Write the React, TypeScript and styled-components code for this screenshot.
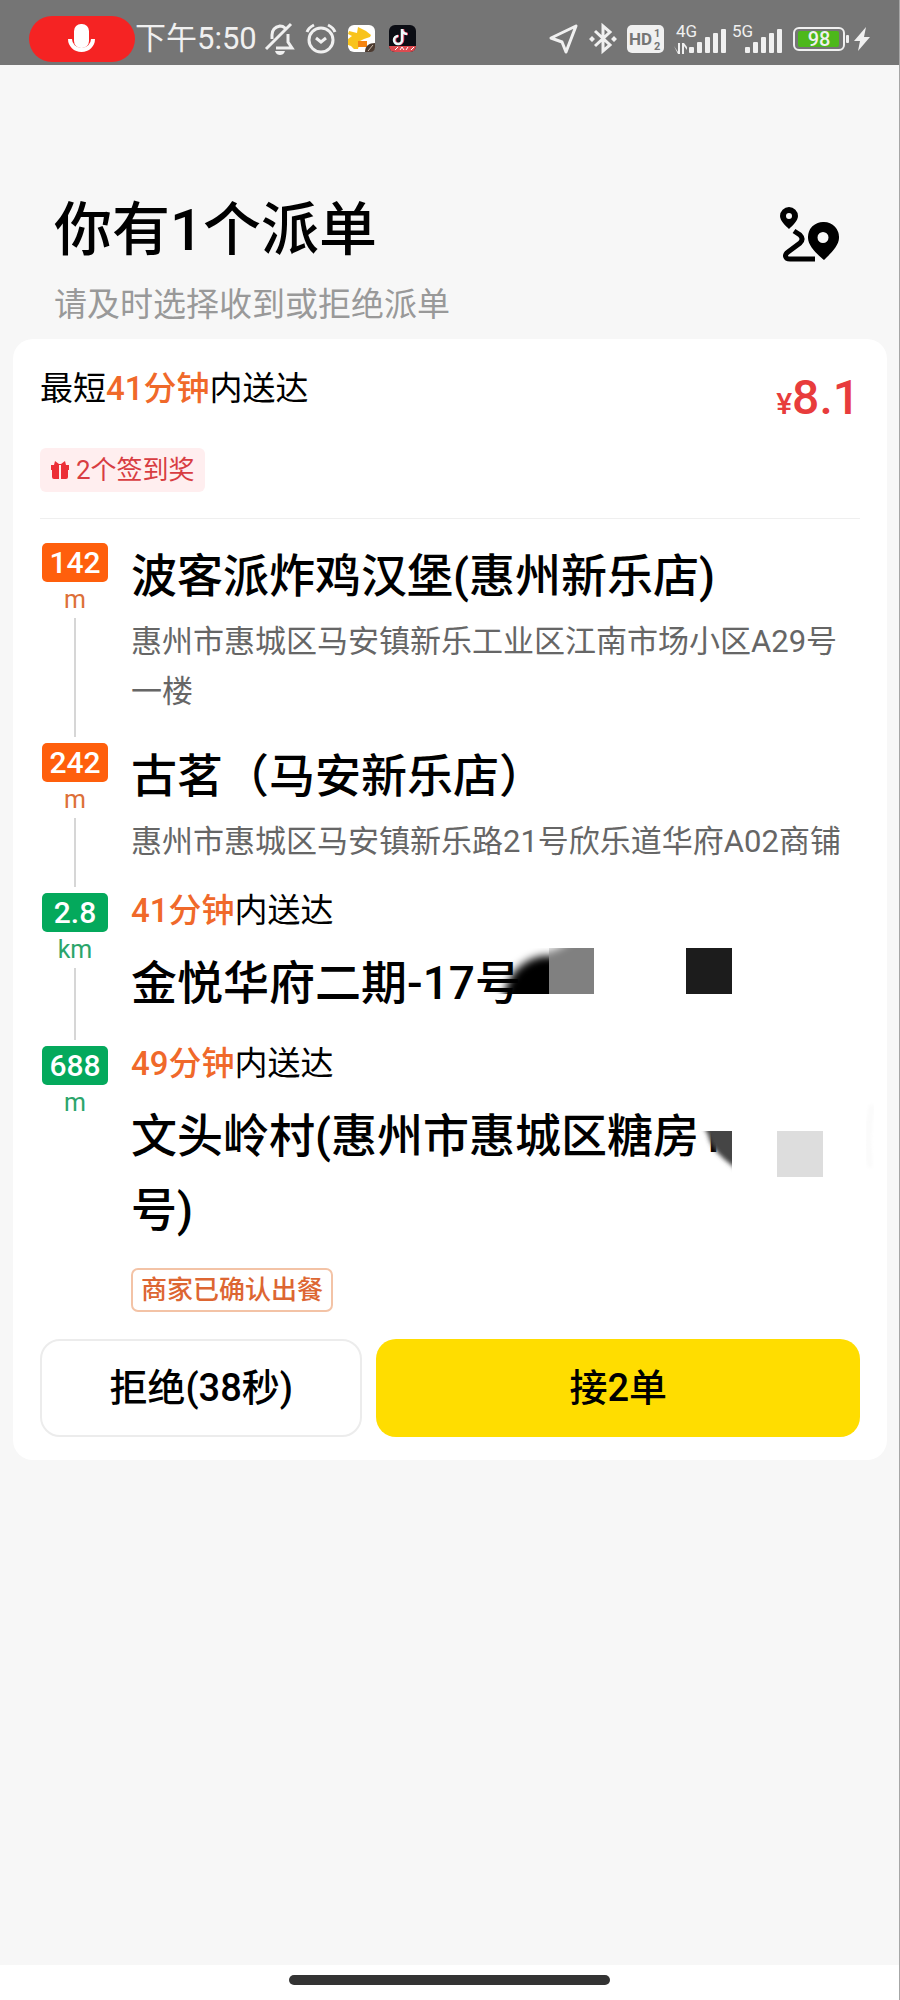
import React from 'react';
import styled, { createGlobalStyle } from 'styled-components';

const GlobalStyle = createGlobalStyle`
  * { box-sizing: border-box; }
  body {
    margin: 0;
    background: #f7f7f7;
    color: #000;
    font-family: Roboto, "Noto Sans CJK SC", sans-serif;
  }
  h1, h2, p, ol { margin: 0; padding: 0; }
`;

const orange = '#f0692a';
const pickup = '#ff5f0c';
const dropoff = '#04a95c';

const Screen = styled.div`
  display: flex;
  flex-direction: column;
  min-height: 100vh;
  border-right: 1px solid #a6a6a6;
`;

const StatusBar = styled.header`
  display: flex;
  justify-content: space-between;
  align-items: center;
  height: 65px;
  padding: 12px 28px 0 29px;
  background: #757575;
  color: #f0f0f0;
`;

const StatusGroup = styled.div<{ $gap: number }>`
  display: flex;
  align-items: center;
  gap: ${(p) => p.$gap}px;
`;

const MicPill = styled.span`
  display: flex;
  align-items: center;
  justify-content: center;
  width: 106px;
  height: 46px;
  border-radius: 23px;
  background: #f52323;
`;

const Clock = styled.time`
  margin: 0 8px 0 0;
  font-size: 31px;
  line-height: 40px;
  white-space: nowrap;
`;

const Glyph = styled.svg`
  display: block;
  flex: none;
  overflow: visible;
`;

const PageHead = styled.div`
  display: flex;
  justify-content: space-between;
  align-items: flex-start;
  padding: 123px 59px 6px 54px;
`;

const PageTitle = styled.h1`
  font-size: 58px;
  line-height: 84px;
  font-weight: 500;
`;

const PageHint = styled.p`
  margin-top: 9px;
  font-size: 33px;
  line-height: 48px;
  color: #999;
`;

const RouteButton = styled.button`
  display: block;
  margin-top: 19px;
  padding: 0;
  border: 0;
  background: none;
`;

const Card = styled.main`
  margin: 4px 12px 0 13px;
  padding: 26px 27px 23px;
  border-radius: 20px;
  background: #fff;
`;

const Summary = styled.div`
  display: flex;
  justify-content: space-between;
  align-items: flex-start;
`;

const Deadline = styled.p`
  font-size: 33px;
  line-height: 48px;
`;

const Minutes = styled.strong`
  font-weight: 500;
  color: ${orange};
`;

const Price = styled.p`
  font-size: 48px;
  line-height: 66px;
  font-weight: 500;
  color: #e83c3c;
`;

const Currency = styled.span`
  font-size: 30px;
  line-height: 1;
`;

const RewardTag = styled.p`
  display: flex;
  align-items: center;
  gap: 6px;
  width: fit-content;
  height: 44px;
  && { margin-top: 17px; padding: 0 10px; }
  border-radius: 6px;
  background: #ffeeef;
  color: #d83d42;
  font-size: 26px;
  line-height: 44px;
`;

const Divider = styled.hr`
  height: 1px;
  margin: 26px 0 20px;
  border: 0;
  background: #efefef;
`;

const Stops = styled.ol`
  list-style: none;
`;

const Stop = styled.li`
  display: grid;
  grid-template-columns: 70px minmax(0, 1fr);
  column-gap: 21px;
`;

const Rail = styled.div`
  display: flex;
  flex-direction: column;
  align-items: center;
  padding-top: 4px;
`;

const Distance = styled.span<{ $color: string }>`
  width: 66px;
  height: 39px;
  border-radius: 5px;
  background: ${(p) => p.$color};
  color: #fff;
  font-size: 30px;
  line-height: 39px;
  font-weight: 500;
  text-align: center;
`;

const Unit = styled.span<{ $color: string }>`
  color: ${(p) => (p.$color === pickup ? '#dd7038' : '#2ba56b')};
  font-size: 25px;
  line-height: 36px;
`;

const Track = styled.span`
  flex: 1;
  width: 2px;
  margin-bottom: 2px;
  background: #d6d6d6;
`;

const StopBody = styled.div<{ $last?: boolean }>`
  padding-bottom: ${(p) => (p.$last ? 27 : 22)}px;
`;

const StopTime = styled.p`
  && { padding: 2px 0 15px; }
  font-size: 33px;
  line-height: 40px;
`;

const StopName = styled.h2`
  position: relative;
  font-size: 46px;
  line-height: 74px;
  font-weight: 500;
`;

const Address = styled.p`
  && { margin-top: 4px; }
  font-size: 31px;
  line-height: 50px;
  color: #666;
`;

const Redaction = styled.svg`
  position: absolute;
  top: 0;
  left: 0;
  overflow: visible;
`;

const ReadyTag = styled.span`
  display: block;
  width: fit-content;
  margin-top: 21px;
  padding: 0 8px;
  border: 2px solid #f3c3a6;
  border-radius: 7px;
  color: #dd6632;
  font-size: 26px;
  line-height: 40px;
  font-weight: 500;
`;

const Actions = styled.div`
  display: grid;
  grid-template-columns: 2fr 3fr;
  gap: 14px;
`;

const Action = styled.button<{ $primary?: boolean }>`
  height: 98px;
  padding: 0;
  border: ${(p) => (p.$primary ? '0' : '2px solid #ececec')};
  border-radius: 20px;
  background: ${(p) => (p.$primary ? '#ffdd00' : '#fff')};
  color: #000;
  font-family: inherit;
  font-size: 38px;
  line-height: 48px;
  font-weight: 500;
`;

const HomeBar = styled.footer`
  display: flex;
  justify-content: center;
  height: 35px;
  margin-top: auto;
  padding-top: 10px;
  background: #fff;
`;

const HomeHandle = styled.span`
  width: 321px;
  height: 10px;
  border-radius: 5px;
  background: #333;
`;

const signalHeights = [6, 11, 16, 20, 24];

function Signal({ label, data }: { label: string; data?: boolean }) {
  const start = data ? 15 : 13;
  return (
    <Glyph width={data ? 53 : 51} height="30" fill="#f0f0f0">
      <text x={data ? 2 : 0} y="13" fontSize="17">{label}</text>
      {data && <path d="M0 22l4 6v-9h2v11H4zM8 19v11h2v-8l3 4v-3l-3-4z" />}
      {signalHeights.map((h, i) => (
        <rect key={h} x={start + i * 8} y={29 - h} width="5" height={h} rx="1" />
      ))}
    </Glyph>
  );
}

function StatusIcons() {
  return (
    <StatusBar>
      <StatusGroup $gap={11}>
        <StatusGroup $gap={0}>
          <MicPill>
            <Glyph width="28" height="30" fill="none">
              <rect x="6" y="0" width="15" height="24" rx="7" fill="#fff" />
              <path d="M2 15c0 6 5 11 11.500 11S25 21 25 15" stroke="#fff" strokeWidth="4" />
            </Glyph>
          </MicPill>
          <Clock>下午5:50</Clock>
          <Glyph width="30" height="32" fill="none" stroke="#f0f0f0" strokeWidth="3">
            <path d="M1 26L26 1M7 16v-4c0-5 3-8 8-9 2 0 4 1 5 2M23 11v8l4 6H11" />
            <path d="M10 28h10c-1 3-3 4-5 4s-4-1-5-4z" fill="#f0f0f0" stroke="none" />
          </Glyph>
        </StatusGroup>
        <Glyph width="31" height="30" fill="none" stroke="#f0f0f0" strokeWidth="3">
          <circle cx="15" cy="16" r="12" />
          <path d="M1 8c1-3 3-5 7-7M29 8c-1-3-3-5-7-7M10 14l5 4 5-4" />
        </Glyph>
        <Glyph width="30" height="28">
          <rect width="27" height="27" rx="6" fill="#fff" />
          <path d="M1 6l8 2 1-6 8 4 5 4-1 2-6 2-4 2-2 8H6l-3-3-3-1v-6l4-3-4-2z" fill="#f8c31c" />
          <rect x="10" y="16" width="9" height="6" fill="#f58410" />
          <path d="M17 27c0-6 4-9 10-9v4c0 3-2 5-5 5z" fill="#4b3a30" />
          <path d="M20 26l5-6" stroke="#c9b7a7" />
        </Glyph>
        <Glyph width="28" height="28">
          <clipPath id="app"><rect width="27" height="27" rx="6" /></clipPath>
          <g clipPath="url(#app)">
            <rect width="27" height="27" fill="#0b0d14" />
            <path d="M14 4v11a4 4 0 1 1-4-4M14 4c0 3 2 5 5 5" fill="none" stroke="#f04a68" strokeWidth="2.500" />
            <path d="M13 4v11a4 4 0 1 1-4-4M13 4c0 3 2 5 5 5" fill="none" stroke="#e9fbfb" strokeWidth="2.500" />
            <path d="M0 21h27v6H0z" fill="#dc4b50" />
            <path d="M6 25l3-3M11 25l2-3 2 3M17 25l2-3M22 25l3-3" stroke="#fff" fill="none" />
          </g>
        </Glyph>
      </StatusGroup>
      <StatusGroup $gap={10}>
        <Glyph width="30" height="30" fill="none" stroke="#f0f0f0" strokeWidth="3" strokeLinejoin="round">
          <path d="M27 2L2 14l11 4 4 10z" />
        </Glyph>
        <Glyph width="28" height="32" fill="none" stroke="#f0f0f0" strokeWidth="3">
          <path d="M6 8l15 14-7 6V3l7 6L6 23" />
          <path d="M3 13l3 3-3 3-3-3zM25 13l3 3-3 3-3-3z" fill="#f0f0f0" stroke="none" />
        </Glyph>
        <Glyph width="37" height="28">
          <rect width="37" height="28" rx="5" fill="#f0f0f0" />
          <g fill="#757575" fontWeight="700">
            <text x="2" y="20" fontSize="17">HD</text>
            <text x="27" y="12" fontSize="11">1</text>
            <text x="27" y="25" fontSize="11">2</text>
          </g>
        </Glyph>
        <StatusGroup $gap={5}>
          <Signal label="4G" data />
          <Signal label="5G" />
        </StatusGroup>
        <StatusGroup $gap={4}>
          <Glyph width="57" height="24">
            <rect x="1" y="1" width="50" height="22" rx="5" fill="none" stroke="#f0f0f0" strokeWidth="2" />
            <rect x="5" y="4" width="41" height="16" rx="2" fill="#4db81b" />
            <rect x="53" y="8" width="3" height="8" rx="1" fill="#f0f0f0" />
            <text x="26" y="19" fontSize="20" fontWeight="500" textAnchor="middle" fill="#f0f0f0">98</text>
          </Glyph>
          <Glyph width="17" height="24" fill="#f0f0f0">
            <path d="M12 0L0 14h6L4 24l12-14h-6z" />
          </Glyph>
        </StatusGroup>
      </StatusGroup>
    </StatusBar>
  );
}

function RouteIcon() {
  return (
    <Glyph width="60" height="56" fillRule="evenodd">
      <path d="M9 0a9 9 0 0 1 9 9c0 5-6 10-9 13C6 19 0 14 0 9a9 9 0 0 1 9-9zm0 6a3 3 0 1 0 0 6 3 3 0 0 0 0-6z" />
      <path d="M44 15a15 15 0 0 1 15 16c0 8-10 17-15 22-6-5-16-14-16-22a15 15 0 0 1 16-16zm-1 10a5 5 0 1 0 0 11 5 5 0 0 0 0-11z" />
      <path d="M14 24l6 4q4 4 0 8L8 45c-4 3-3 7 2 7h25" fill="none" stroke="#000" strokeWidth="5" />
    </Glyph>
  );
}

function GiftIcon() {
  return (
    <Glyph width="20" height="20" fill="#ec2f37">
      <path d="M5 1l4 3h2l4-3 1 4h3v5h-1v7q0 2-2 2h-5V5H9v14H4q-2 0-2-2v-7H1V5h3z" />
    </Glyph>
  );
}

function BuildingRedaction() {
  return (
    <Redaction width="600" height="74" aria-hidden="true">
      <defs>
        <filter id="soft" x="-50%" y="-50%" width="200%" height="200%"><feGaussianBlur stdDeviation="4" /></filter>
        <clipPath id="blockA"><rect x="361" y="2" width="57" height="46" /></clipPath>
        <clipPath id="blockB"><rect x="418" y="0" width="45" height="48" /></clipPath>
      </defs>
      <g clipPath="url(#blockA)">
        <path d="M371 60q4-42 40-50h30v50z" filter="url(#soft)" />
      </g>
      <rect x="418" y="2" width="45" height="46" fill="#808080" />
      <g clipPath="url(#blockB)">
        <path d="M405-8h36q-10 12-36 16z" fill="#fff" filter="url(#soft)" />
      </g>
      <rect x="555" y="2" width="46" height="46" fill="#1c1c1c" />
    </Redaction>
  );
}

function VillageRedaction() {
  return (
    <Redaction width="740" height="80" aria-hidden="true">
      <defs>
        <filter id="edge" x="-50%" y="-50%" width="200%" height="200%"><feGaussianBlur stdDeviation="2" /></filter>
        <clipPath id="corner"><rect x="567" y="32" width="34" height="46" /></clipPath>
      </defs>
      <rect x="568" y="14" width="32" height="19" fill="#fff" />
      <g clipPath="url(#corner)">
        <path d="M569 20h50v66q-8-12-26-26-14-12-16-24z" fill="#454545" filter="url(#edge)" />
      </g>
      <rect x="646" y="32" width="46" height="46" fill="#ddd" />
      <path d="M741 6q-6 30-2 62" fill="none" stroke="#f8f8f8" strokeWidth="4" filter="url(#edge)" />
    </Redaction>
  );
}

interface StopData {
  distance: string;
  unit: string;
  color: string;
  minutes?: string;
  name: React.ReactNode;
  address?: string;
  tag?: string;
}

const stops: StopData[] = [
  {
    distance: '142', unit: 'm', color: pickup,
    name: '波客派炸鸡汉堡(惠州新乐店)',
    address: '惠州市惠城区马安镇新乐工业区江南市场小区A29号一楼',
  },
  {
    distance: '242', unit: 'm', color: pickup,
    name: '古茗（马安新乐店）',
    address: '惠州市惠城区马安镇新乐路21号欣乐道华府A02商铺',
  },
  {
    distance: '2.8', unit: 'km', color: dropoff, minutes: '41分钟',
    name: <>金悦华府二期-17号<BuildingRedaction /></>,
  },
  {
    distance: '688', unit: 'm', color: dropoff, minutes: '49分钟',
    name: <>文头岭村(惠州市惠城区糖房1<br />号)<VillageRedaction /></>,
    tag: '商家已确认出餐',
  },
];

export default function App() {
  return (
    <Screen>
      <GlobalStyle />
      <StatusIcons />
      <PageHead>
        <div>
          <PageTitle>你有1个派单</PageTitle>
          <PageHint>请及时选择收到或拒绝派单</PageHint>
        </div>
        <RouteButton type="button" aria-label="路线"><RouteIcon /></RouteButton>
      </PageHead>
      <Card>
        <Summary>
          <Deadline>最短<Minutes>41分钟</Minutes>内送达</Deadline>
          <Price><Currency>¥</Currency>8.1</Price>
        </Summary>
        <RewardTag><GiftIcon />2个签到奖</RewardTag>
        <Divider />
        <Stops>
          {stops.map((stop, i) => {
            const last = i === stops.length - 1;
            return (
              <Stop key={stop.distance}>
                <Rail>
                  <Distance $color={stop.color}>{stop.distance}</Distance>
                  <Unit $color={stop.color}>{stop.unit}</Unit>
                  {!last && <Track />}
                </Rail>
                <StopBody $last={last}>
                  {stop.minutes && <StopTime><Minutes>{stop.minutes}</Minutes>内送达</StopTime>}
                  <StopName>{stop.name}</StopName>
                  {stop.address && <Address>{stop.address}</Address>}
                  {stop.tag && <ReadyTag>{stop.tag}</ReadyTag>}
                </StopBody>
              </Stop>
            );
          })}
        </Stops>
        <Actions>
          <Action type="button">拒绝(38秒)</Action>
          <Action type="button" $primary>接2单</Action>
        </Actions>
      </Card>
      <HomeBar><HomeHandle /></HomeBar>
    </Screen>
  );
}
